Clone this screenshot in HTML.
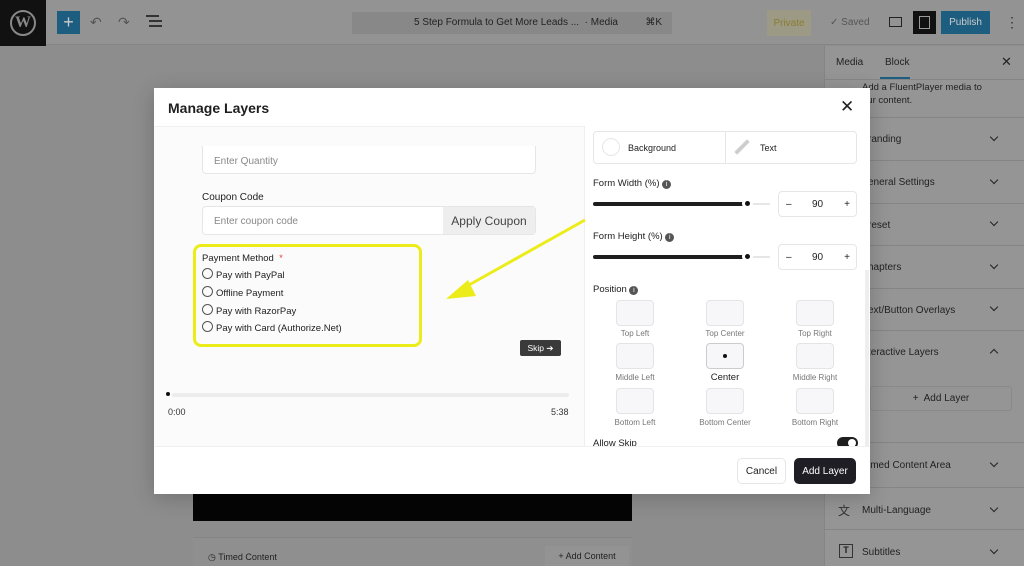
<!DOCTYPE html>
<html><head><meta charset="utf-8"><style>
*{box-sizing:border-box;margin:0;padding:0}
body{width:1024px;height:566px;overflow:hidden;background:#8d8d8d;font-family:"Liberation Sans",sans-serif;position:relative;color:#1e1e1e}
.a{position:absolute}
.chev{width:6px;height:6px;border-right:1.5px solid #222;border-bottom:1.5px solid #222;transform:rotate(45deg)}
.pos{width:38px;height:26px;border:1px solid #e4e4e7;background:#f7f7f9;border-radius:4px}
.pl{font-size:8px;color:#777;text-align:center;width:90px}
.rad{width:11px;height:11px;border:1px solid #555;border-radius:50%}
.fc{display:flex;align-items:center;justify-content:center}
</style></head><body>
<div class="a" style="left:0;top:0;width:1024px;height:45px;background:#939393;border-bottom:1px solid #858585"></div>
<div class="a" style="left:0;top:0;width:46px;height:46px;background:#111"></div>
<div class="a" style="left:10px;top:10px;width:26px;height:26px;border-radius:50%;border:2px solid #888;color:#888;font:bold 16px 'Liberation Serif',serif;text-align:center;line-height:22px">W</div>
<div class="a fc" style="left:57px;top:11px;width:23px;height:23px;background:#1d5d80;color:#ccc;font-size:18px">+</div>
<div class="a" style="left:90px;top:14px;color:#555;font-size:14px">↶</div>
<div class="a" style="left:118px;top:14px;color:#555;font-size:14px">↷</div>
<div class="a" style="left:146px;top:15px;width:13px;height:2px;background:#333;box-shadow:3px 5px 0 #333,3px 10px 0 #333"></div>
<div class="a" style="left:352px;top:12px;width:320px;height:22px;background:#888;font-size:10px;color:#222;line-height:22px"><span style="margin-left:62px">5 Step Formula to Get More Leads ...&nbsp; · Media</span><span style="position:absolute;right:10px">⌘K</span></div>
<div class="a fc" style="left:767px;top:10px;width:44px;height:26px;background:#9c9a84;color:#8a7c30;font-size:10px">Private</div>
<div class="a" style="left:830px;top:17px;color:#555;font-size:10px">✓ Saved</div>
<div class="a" style="left:889px;top:17px;width:13px;height:10px;border:1.5px solid #222"></div>
<div class="a" style="left:913px;top:11px;width:23px;height:23px;background:#111"><div class="a" style="left:6px;top:5px;width:11px;height:13px;border:1.5px solid #999"></div></div>
<div class="a fc" style="left:941px;top:11px;width:49px;height:23px;background:#1d5d80;color:#ccc;font-size:10px">Publish</div>
<div class="a" style="left:1005px;top:14px;color:#333;font-size:14px">⋮</div>
<div class="a" style="left:824px;top:46px;width:200px;height:520px;background:#959595;border-left:1px solid #858585"></div>
<div class="a" style="left:836px;top:57px;font-size:10px;color:#222">Media</div>
<div class="a" style="left:885px;top:57px;font-size:10px;color:#222">Block</div>
<div class="a" style="left:880px;top:77px;width:30px;height:2px;background:#1d5d80"></div>
<div class="a" style="left:1001px;top:54px;font-size:13px;color:#222">✕</div>
<div class="a" style="left:825px;top:79px;width:199px;height:1px;background:#858585"></div>
<div class="a" style="left:862px;top:81px;font-size:9.5px;color:#222;line-height:13px">Add a FluentPlayer media to<br>our content.</div>
<div class="a" style="left:825px;top:117px;width:199px;height:1px;background:#858585"></div>
<div class="a" style="left:868px;top:134px;font-size:10px;color:#222">randing</div><div class="a chev" style="left:991px;top:134px"></div>
<div class="a" style="left:825px;top:160px;width:199px;height:1px;background:#858585"></div>
<div class="a" style="left:868px;top:177px;font-size:10px;color:#222">eneral Settings</div><div class="a chev" style="left:991px;top:177px"></div>
<div class="a" style="left:825px;top:203px;width:199px;height:1px;background:#858585"></div>
<div class="a" style="left:868px;top:220px;font-size:10px;color:#222">reset</div><div class="a chev" style="left:991px;top:219px"></div>
<div class="a" style="left:825px;top:245px;width:199px;height:1px;background:#858585"></div>
<div class="a" style="left:868px;top:262px;font-size:10px;color:#222">hapters</div><div class="a chev" style="left:991px;top:262px"></div>
<div class="a" style="left:825px;top:288px;width:199px;height:1px;background:#858585"></div>
<div class="a" style="left:868px;top:305px;font-size:10px;color:#222">ext/Button Overlays</div><div class="a chev" style="left:991px;top:304px"></div>
<div class="a" style="left:825px;top:330px;width:199px;height:1px;background:#858585"></div>
<div class="a" style="left:868px;top:347px;font-size:10px;color:#222">teractive Layers</div><div class="a chev" style="left:991px;top:350px;transform:rotate(-135deg)"></div>
<div class="a fc" style="left:870px;top:386px;width:142px;height:25px;border:1px solid #8a8a8a;border-radius:3px;font-size:10px;color:#222">+&nbsp; Add Layer</div>
<div class="a" style="left:825px;top:442px;width:199px;height:1px;background:#858585"></div>
<div class="a" style="left:868px;top:460px;font-size:10px;color:#222">imed Content Area</div><div class="a chev" style="left:991px;top:460px"></div>
<div class="a" style="left:825px;top:487px;width:199px;height:1px;background:#858585"></div>
<div class="a" style="left:838px;top:502px;font-size:12px;color:#333">文</div>
<div class="a" style="left:862px;top:505px;font-size:10px;color:#222">Multi-Language</div><div class="a chev" style="left:991px;top:505px"></div>
<div class="a" style="left:825px;top:529px;width:199px;height:1px;background:#858585"></div>
<div class="a" style="left:839px;top:544px;width:14px;height:14px;border:1.5px solid #333;font-size:9px;text-align:center;line-height:11px;font-weight:bold">T</div>
<div class="a" style="left:862px;top:547px;font-size:10px;color:#222">Subtitles</div><div class="a chev" style="left:991px;top:547px"></div>
<div class="a" style="left:193px;top:494px;width:439px;height:27px;background:#050505"></div>
<div class="a" style="left:193px;top:537px;width:439px;height:29px;background:#8f8f8f;border-top:1px solid #858585"></div>
<div class="a" style="left:208px;top:552px;font-size:9px;color:#222">◷ Timed Content</div>
<div class="a fc" style="left:545px;top:546px;width:84px;height:20px;background:#939393;font-size:9px;color:#222">+ Add Content</div>
<div class="a" style="left:154px;top:88px;width:716px;height:406px;background:#fff;box-shadow:0 4px 20px rgba(0,0,0,.2)"></div>
<div class="a" style="left:168px;top:100px;font-size:14px;font-weight:bold;color:#1e1e1e">Manage Layers</div>
<div class="a" style="left:840px;top:97px;font-size:17px;color:#222">✕</div>
<div class="a" style="left:154px;top:126px;width:430px;height:320px;background:#fbfbfb;border-top:1px solid #f0f0f0"></div>
<div class="a" style="left:584px;top:126px;width:1px;height:320px;background:#eee"></div>
<div class="a" style="left:154px;top:446px;width:716px;height:1px;background:#f0f0f0"></div>
<div class="a" style="left:202px;top:146px;width:334px;height:28px;background:#fff;border:1px solid #e6e6e6;border-top:none;border-radius:0 0 4px 4px"></div>
<div class="a" style="left:214px;top:156px;font-size:10px;color:#888">Enter Quantity</div>
<div class="a" style="left:202px;top:192px;font-size:10px;color:#1e1e1e">Coupon Code</div>
<div class="a" style="left:202px;top:206px;width:334px;height:29px;background:#fff;border:1px solid #e6e6e6;border-radius:4px"></div>
<div class="a" style="left:214px;top:216px;font-size:10px;color:#888">Enter coupon code</div>
<div class="a fc" style="left:443px;top:207px;width:92px;height:27px;background:#eeeeef;font-size:12px;color:#444">Apply Coupon</div>
<div class="a" style="left:193px;top:244px;width:229px;height:103px;border:3px solid #ecec1a;border-radius:8px"></div>
<div class="a" style="left:202px;top:253px;font-size:9.5px;color:#1e1e1e">Payment Method <span style="color:#e44">&nbsp;*</span></div>
<div class="a rad" style="left:202px;top:268px"></div><div class="a" style="left:216px;top:270px;font-size:9.5px">Pay with PayPal</div>
<div class="a rad" style="left:202px;top:286px"></div><div class="a" style="left:216px;top:288px;font-size:9.5px">Offline Payment</div>
<div class="a rad" style="left:202px;top:304px"></div><div class="a" style="left:216px;top:306px;font-size:9.5px">Pay with RazorPay</div>
<div class="a rad" style="left:202px;top:321px"></div><div class="a" style="left:216px;top:323px;font-size:9.5px">Pay with Card (Authorize.Net)</div>
<svg class="a" style="left:440px;top:200px" width="150" height="110"><line x1="145" y1="20" x2="20" y2="90" stroke="#ecec1a" stroke-width="3"/><polygon points="6,99 28,80 36,96" fill="#ecec1a"/></svg>
<div class="a fc" style="left:520px;top:340px;width:41px;height:16px;background:#3a3a3a;border-radius:2px;color:#fff;font-size:8.5px">Skip ➔</div>
<div class="a" style="left:172px;top:393px;width:397px;height:4px;background:#ececec;border-radius:2px"></div>
<div class="a" style="left:166px;top:392px;width:4px;height:4px;background:#111;border-radius:50%"></div>
<div class="a" style="left:168px;top:407px;font-size:9px;color:#333">0:00</div>
<div class="a" style="left:551px;top:407px;font-size:9px;color:#333">5:38</div>
<div class="a" style="left:593px;top:131px;width:264px;height:33px;border:1px solid #e6e6e6;border-radius:4px"></div>
<div class="a" style="left:725px;top:131px;width:1px;height:33px;background:#e6e6e6"></div>
<div class="a" style="left:602px;top:138px;width:18px;height:18px;border:1px solid #e6e6e6;border-radius:50%"></div>
<div class="a" style="left:628px;top:143px;font-size:9px">Background</div>
<div class="a" style="left:733px;top:138px;width:18px;height:18px;border-radius:50%;background:linear-gradient(135deg,#fff 40%,#ccc 45%,#ccc 55%,#fff 60%)"></div>
<div class="a" style="left:760px;top:143px;font-size:9px">Text</div>
<div class="a" style="left:593px;top:178px;font-size:9.5px">Form Width (%) <span style="display:inline-block;width:9px;height:9px;border-radius:50%;background:#555;color:#fff;font-size:7px;text-align:center;line-height:9px">i</span></div>
<div class="a" style="left:593px;top:202px;width:155px;height:4px;background:#1e1e1e;border-radius:2px"></div>
<div class="a" style="left:748px;top:203px;width:22px;height:2px;background:#e6e6e6"></div>
<div class="a" style="left:745px;top:201px;width:5px;height:5px;background:#111;border-radius:50%;box-shadow:0 0 0 3px #fff"></div>
<div class="a" style="left:778px;top:191px;width:79px;height:26px;border:1px solid #e6e6e6;border-radius:4px;font-size:10px"><span class="a" style="left:7px;top:7px">–</span><span class="a" style="left:33px;top:7px">90</span><span class="a" style="right:6px;top:7px">+</span></div>
<div class="a" style="left:593px;top:231px;font-size:9.5px">Form Height (%) <span style="display:inline-block;width:9px;height:9px;border-radius:50%;background:#555;color:#fff;font-size:7px;text-align:center;line-height:9px">i</span></div>
<div class="a" style="left:593px;top:255px;width:155px;height:4px;background:#1e1e1e;border-radius:2px"></div>
<div class="a" style="left:748px;top:256px;width:22px;height:2px;background:#e6e6e6"></div>
<div class="a" style="left:745px;top:254px;width:5px;height:5px;background:#111;border-radius:50%;box-shadow:0 0 0 3px #fff"></div>
<div class="a" style="left:778px;top:244px;width:79px;height:26px;border:1px solid #e6e6e6;border-radius:4px;font-size:10px"><span class="a" style="left:7px;top:7px">–</span><span class="a" style="left:33px;top:7px">90</span><span class="a" style="right:6px;top:7px">+</span></div>
<div class="a" style="left:865px;top:270px;width:4px;height:176px;background:#eee"></div>
<div class="a" style="left:593px;top:284px;font-size:9.5px">Position <span style="display:inline-block;width:9px;height:9px;border-radius:50%;background:#555;color:#fff;font-size:7px;text-align:center;line-height:9px">i</span></div>
<div class="a pos" style="left:616px;top:300px"></div><div class="a pos" style="left:706px;top:300px"></div><div class="a pos" style="left:796px;top:300px"></div>
<div class="a pl" style="left:590px;top:329px">Top Left</div><div class="a pl" style="left:680px;top:329px">Top Center</div><div class="a pl" style="left:770px;top:329px">Top Right</div>
<div class="a pos" style="left:616px;top:343px"></div><div class="a pos" style="left:706px;top:343px;border-color:#ccc"><div class="a" style="left:16px;top:10px;width:4px;height:4px;background:#111;border-radius:50%"></div></div><div class="a pos" style="left:796px;top:343px"></div>
<div class="a pl" style="left:590px;top:373px">Middle Left</div><div class="a pl" style="left:680px;top:372px;font-size:9.5px;color:#1e1e1e">Center</div><div class="a pl" style="left:770px;top:373px">Middle Right</div>
<div class="a pos" style="left:616px;top:388px"></div><div class="a pos" style="left:706px;top:388px"></div><div class="a pos" style="left:796px;top:388px"></div>
<div class="a pl" style="left:590px;top:418px">Bottom Left</div><div class="a pl" style="left:680px;top:418px">Bottom Center</div><div class="a pl" style="left:770px;top:418px">Bottom Right</div>
<div class="a" style="left:593px;top:438px;width:100px;height:8px;overflow:hidden;font-size:9.5px;line-height:12px">Allow Skip</div>
<div class="a" style="left:837px;top:437px;width:21px;height:9px;overflow:hidden"><div style="width:21px;height:12px;background:#1e1e1e;border-radius:6px;position:relative"><div class="a" style="right:2px;top:2px;width:8px;height:8px;background:#fff;border-radius:50%"></div></div></div>
<div class="a fc" style="left:737px;top:458px;width:49px;height:26px;border:1px solid #e6e6e6;border-radius:5px;font-size:10px">Cancel</div>
<div class="a fc" style="left:794px;top:458px;width:62px;height:26px;background:#1e1e24;border-radius:5px;color:#fff;font-size:10px">Add Layer</div>
</body></html>
